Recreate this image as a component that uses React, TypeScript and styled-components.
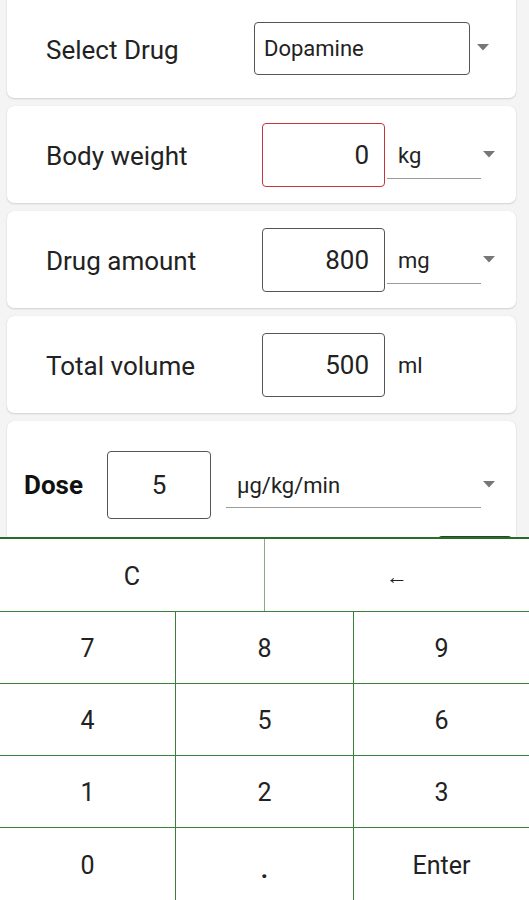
import styled, { createGlobalStyle } from "styled-components";

const GlobalStyle = createGlobalStyle`
  html, body {
    margin: 0;
    padding: 0;
    background: #f4f4f4;
    font-family: Roboto, "Noto Sans", "Liberation Sans", sans-serif;
  }
`;

type CardProps = { $height: number; $padTop?: number; $padLeft: number };

function Arrow() {
  return (
    <ArrowIcon width="12" height="7" viewBox="0 0 12 7">
      <path d="M0 0 L12 0 L6 6.5 Z" fill="#777" />
    </ArrowIcon>
  );
}

function UnitRow({ unit, select }: { unit: string; select: boolean }) {
  return select ? (
    <UnitSelect $width={94}>
      <span>{unit}</span>
      <Arrow />
    </UnitSelect>
  ) : (
    <UnitText>{unit}</UnitText>
  );
}

const keys = ["7", "8", "9", "4", "5", "6", "1", "2", "3", "0", ".", "Enter"];

export default function App() {
  return (
    <>
      <GlobalStyle />
      <Page>
        <Scroller>
          <Card $height={105} $padTop={9} $padLeft={39}>
            <Label>Select Drug</Label>
            <DrugSelect>
              <span>Dopamine</span>
            </DrugSelect>
            <DrugArrow>
              <Arrow />
            </DrugArrow>
          </Card>
          <Card $height={97} $padTop={2} $padLeft={39}>
            <Label>Body weight</Label>
            <NumberBox $width={123} $invalid>0</NumberBox>
            <UnitRow unit="kg" select />
          </Card>
          <Card $height={97} $padTop={2} $padLeft={39}>
            <Label>Drug amount</Label>
            <NumberBox $width={123}>800</NumberBox>
            <UnitRow unit="mg" select />
          </Card>
          <Card $height={97} $padTop={2} $padLeft={39}>
            <Label>Total volume</Label>
            <NumberBox $width={123}>500</NumberBox>
            <UnitRow unit="ml" select={false} />
          </Card>
          <DoseCard>
            <DoseRow>
              <DoseLabel>Dose</DoseLabel>
              <DoseBox>5</DoseBox>
              <UnitSelect $width={255}>
                <span>µg/kg/min</span>
                <Arrow />
              </UnitSelect>
            </DoseRow>
            <CalcRow>
              <CalcButton />
            </CalcRow>
          </DoseCard>
        </Scroller>
        <Keypad>
          <TopKeys>
            <Key>C</Key>
            <Key $small>←</Key>
          </TopKeys>
          <NumKeys>
            {keys.map((k) => (
              <Key key={k} $dot={k === "."}>
                {k}
              </Key>
            ))}
          </NumKeys>
        </Keypad>
      </Page>
    </>
  );
}

const Page = styled.div`
  height: 900px;
  width: 529px;
  display: flex;
  flex-direction: column;
  overflow: hidden;
`;

const Scroller = styled.div`
  height: 544px;
  overflow: hidden;
  display: flex;
  flex-direction: column;
  gap: 8px;
  padding: 0 13px 0 7px;
  margin-top: -7px;
  flex-shrink: 0;
`;

const Card = styled.div<CardProps>`
  flex-shrink: 0;
  height: ${(p) => p.$height}px;
  box-sizing: border-box;
  padding: ${(p) => p.$padTop ?? 0}px 0 0 ${(p) => p.$padLeft}px;
  display: flex;
  align-items: center;
  background: #fff;
  border-radius: 7px;
  box-shadow: 0 1px 2px rgba(0, 0, 0, 0.14), 0 0 1px rgba(0, 0, 0, 0.1);
`;

const Label = styled.div`
  width: 216px;
  flex-shrink: 0;
  font-size: 26px;
  color: #222;
`;

const DrugSelect = styled.div`
  margin: -4px 0 0 -8px;
  width: 216px;
  height: 53px;
  box-sizing: border-box;
  border: 1px solid #555;
  border-radius: 4px;
  display: flex;
  align-items: center;
  padding-left: 9px;
  font-size: 22px;
  color: #222;
`;

const DrugArrow = styled.div`
  margin: -6px 0 0 7px;
  display: flex;
`;

const ArrowIcon = styled.svg`
  display: block;
`;

const NumberBox = styled.div<{ $width: number; $invalid?: boolean }>`
  width: ${(p) => p.$width}px;
  height: 64px;
  margin-top: -1px;
  box-sizing: border-box;
  border: 1px solid ${(p) => (p.$invalid ? "#c8343c" : "#555")};
  border-radius: 4px;
  display: flex;
  align-items: center;
  justify-content: flex-end;
  padding-right: 15px;
  font-size: 26px;
  color: #222;
`;

const UnitSelect = styled.div<{ $width: number }>`
  position: relative;
  margin-left: 2px;
  width: ${(p) => p.$width + 14}px;
  height: 54px;
  display: flex;
  align-items: center;
  justify-content: space-between;
  padding: 0 0 0 11px;
  box-sizing: border-box;
  font-size: 22px;
  color: #222;

  &::after {
    content: "";
    position: absolute;
    left: 0;
    bottom: 4px;
    width: ${(p) => p.$width}px;
    height: 1px;
    background: #9a9a9a;
  }

  & > svg {
    margin-top: -2px;
  }
`;

const UnitText = styled.div`
  margin-left: 13px;
  font-size: 22px;
  color: #222;
`;

const DoseCard = styled.div`
  flex-shrink: 0;
  background: #fff;
  border-radius: 7px;
  box-shadow: 0 1px 2px rgba(0, 0, 0, 0.14), 0 0 1px rgba(0, 0, 0, 0.1);
  padding: 30px 0 0 17px;
  display: flex;
  flex-direction: column;
  gap: 17px;
`;

const DoseRow = styled.div`
  display: flex;
  align-items: center;
`;

const DoseLabel = styled.div`
  width: 83px;
  font-size: 26px;
  font-weight: 700;
  color: #111;
`;

const DoseBox = styled.div`
  width: 104px;
  height: 68px;
  box-sizing: border-box;
  border: 1px solid #555;
  border-radius: 4px;
  display: flex;
  align-items: center;
  justify-content: center;
  font-size: 26px;
  color: #222;
  margin-right: 13px;
`;

const CalcRow = styled.div`
  display: flex;
  justify-content: flex-end;
  padding-right: 4px;
`;

const CalcButton = styled.div`
  width: 74px;
  height: 44px;
  border-radius: 4px;
  background: #1b4d1e;
`;

const Keypad = styled.div`
  flex: 1;
  display: flex;
  flex-direction: column;
  background: #fff;
  border-top: 2px solid #2a6a2a;
`;

const TopKeys = styled.div`
  display: grid;
  grid-template-columns: 265px 1fr;
  height: 72px;
  border-bottom: 1px solid #3a7f3a;

  & > div:first-child {
    border-right: 1px solid #8aa88a;
  }
`;

const NumKeys = styled.div`
  flex: 1;
  display: grid;
  grid-template-columns: 176px 178px 1fr;
  grid-template-rows: repeat(4, 1fr);

  & > div {
    border-bottom: 1px solid #3a7f3a;
    border-right: 1px solid #3a7f3a;
  }
  & > div:nth-child(3n) {
    border-right: none;
  }
  & > div:nth-last-child(-n + 3) {
    border-bottom: none;
  }
`;

const Key = styled.div<{ $small?: boolean; $dot?: boolean }>`
  display: flex;
  align-items: center;
  justify-content: center;
  font-size: ${(p) => (p.$small ? "22px" : "25px")};
  font-weight: ${(p) => (p.$dot ? 700 : 400)};
  color: #222;
  padding-top: ${(p) => (p.$dot ? "10px" : p.$small ? "4px" : "2px")};
`;
